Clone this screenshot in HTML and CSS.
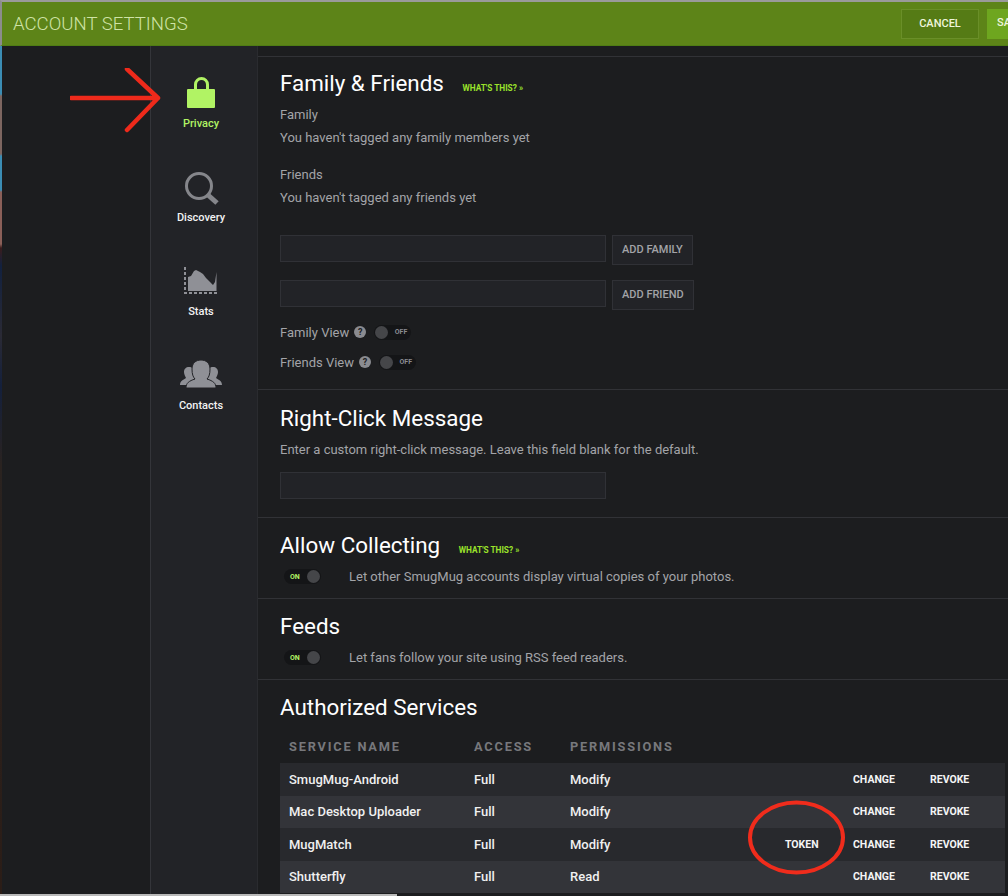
FILE: index.html
```html
<!DOCTYPE html>
<html>
<head>
<meta charset="utf-8">
<title>Account Settings</title>
<link rel="stylesheet" href="styles.css">
</head>
<body>

<div class="topbar">
	<div class="title">ACCOUNT SETTINGS</div>
	<div class="actions">
		<a class="btn cancel">CANCEL</a>
		<a class="btn save">SAVE</a>
	</div>
</div>

<div class="main">
	<div class="gutter"></div>

	<div class="sidebar">
		<div class="navitem active">
			<svg width="30" height="36" viewBox="0 0 30 36"><path d="M9.500 14V8.500a6 6 0 0 1 12 0V14" fill="none" stroke="#b1f364" stroke-width="3"/><rect x="1" y="13" width="28" height="19" rx="1" fill="#b1f364"/></svg>
			<span>Privacy</span>
		</div>
		<div class="navitem">
			<svg width="36" height="36" viewBox="0 0 36 36"><circle cx="16" cy="16" r="12.500" fill="none" stroke="#85868b" stroke-width="3"/><path d="M25 25l9 8" stroke="#85868b" stroke-width="5"/></svg>
			<span>Discovery</span>
		</div>
		<div class="navitem">
			<svg width="36" height="36" viewBox="0 0 36 36"><path d="M5 27V13l3-1 3-5 2-1 4 2 3 2 3 4 4 4 3 3 2-3 1.500-10v19z" fill="#8f9096"/><path d="M2 3v26h32" fill="none" stroke="#8f9096" stroke-width="2" stroke-dasharray="3 2"/></svg>
			<span>Stats</span>
		</div>
		<div class="navitem">
			<svg width="44" height="36" viewBox="0 0 44 36"><g fill="#8f9096"><path d="M1 27c0-4 3-5 6-7-1-2-2-4-2-6 0-3 2-5 5-5s5 2 5 5v8l-6 5z"/><path d="M43 27c0-4-3-5-6-7 1-2 2-4 2-6 0-3-2-5-5-5s-5 2-5 5v8l6 5z"/><path d="M7 30c0-5 3-7 9-9-2-2-3-5-3-10 0-6 4-9 9-9s9 3 9 9c0 5-1 8-3 10 6 2 9 4 9 9z" stroke="#222327"/></g></svg>
			<span>Contacts</span>
		</div>
	</div>

	<div class="content">
		<div class="section family">
			<h2>Family &amp; Friends <a class="whats">WHAT'S THIS? &raquo;</a></h2>
			<p class="label">Family</p>
			<p class="label">You haven't tagged any family members yet</p>
			<p class="label second">Friends</p>
			<p class="label">You haven't tagged any friends yet</p>
			<div class="addrow first">
				<div class="field"></div>
				<a class="addbtn">ADD FAMILY</a>
			</div>
			<div class="addrow">
				<div class="field"></div>
				<a class="addbtn">ADD FRIEND</a>
			</div>
			<div class="viewrow">
				Family View <span class="help">?</span>
				<span class="toggle off"><i></i><b>OFF</b></span>
			</div>
			<div class="viewrow">
				Friends View <span class="help">?</span>
				<span class="toggle off"><i></i><b>OFF</b></span>
			</div>
		</div>

		<div class="section rightclick">
			<h2>Right-Click Message</h2>
			<p class="label">Enter a custom right-click message. Leave this field blank for the default.</p>
			<div class="field lone"></div>
		</div>

		<div class="section short">
			<h2>Allow Collecting <a class="whats">WHAT'S THIS? &raquo;</a></h2>
			<div class="onrow">
				<span class="toggle on"><b>ON</b><i></i></span>
				Let other SmugMug accounts display virtual copies of your photos.
			</div>
		</div>

		<div class="section short">
			<h2>Feeds</h2>
			<div class="onrow">
				<span class="toggle on"><b>ON</b><i></i></span>
				Let fans follow your site using RSS feed readers.
			</div>
		</div>

		<div class="section services">
			<h2>Authorized Services</h2>
			<table>
				<tr class="head"><th class="c1">SERVICE NAME</th><th class="c2">ACCESS</th><th class="c3">PERMISSIONS</th><th class="c4"></th><th class="c5"></th><th class="c6"></th></tr>
				<tr><td>SmugMug-Android</td><td>Full</td><td>Modify</td><td></td><td class="act">CHANGE</td><td class="act">REVOKE</td></tr>
				<tr><td>Mac Desktop Uploader</td><td>Full</td><td>Modify</td><td></td><td class="act">CHANGE</td><td class="act">REVOKE</td></tr>
				<tr><td>MugMatch</td><td>Full</td><td>Modify</td><td class="act token">TOKEN</td><td class="act">CHANGE</td><td class="act">REVOKE</td></tr>
				<tr><td>Shutterfly</td><td>Full</td><td>Read</td><td></td><td class="act">CHANGE</td><td class="act">REVOKE</td></tr>
			</table>
		</div>
	</div>
</div>

<!-- red marks and window edge on top of the screenshot -->
<svg class="arrow" width="100" height="72" viewBox="0 0 100 72"><path d="M1 30H88M57 1 88 30 57 62" fill="none" stroke="#ee2a1b" stroke-width="4.500" stroke-linecap="round" stroke-linejoin="round"/></svg>
<svg class="circle" width="100" height="78" viewBox="0 0 100 78"><ellipse cx="48.500" cy="37.500" rx="46.500" ry="35" fill="none" stroke="#f02c1c" stroke-width="4"/></svg>
<div class="edge"></div>

</body>
</html>
```

FILE: styles.css
```css
html, body { margin: 0; padding: 0; }
body {
	background: #1c1d1f;
	color: #a3a4a8;
	font-family: Roboto, "Liberation Sans", sans-serif;
	font-size: 13px;
	height: 896px;
	width: 1008px;
	overflow: hidden;
	position: relative;
}

/* top bar */
.topbar {
	background: #5d8418;
	border-top: 2px solid #9a9a9a;
	border-left: 2px solid #8c8c8c;
	border-bottom: 1px solid #4f7d14;
	box-sizing: border-box;
	height: 46px;
	display: flex;
	align-items: center;
	justify-content: space-between;
	padding-left: 11px;
}
.title {
	color: #cfe3a6;
	font-size: 18.600px;
	font-weight: 300;
}
.actions { display: flex; gap: 8px; width: 107px; flex: none; margin-top: 1px; overflow: hidden; }
.btn {
	box-sizing: border-box;
	color: #eef5dc;
	font-size: 11px;
	font-weight: 500;
	height: 30px;
	line-height: 28px;
	text-align: center;
	flex: none;
}
.cancel { border: 1px solid #6a8f28; background: #557b15; width: 78px; }
.save { background: #6ea61f; width: 60px; text-align: left; padding-left: 10px; }

.main { display: flex; height: 850px; }
.gutter {
	width: 151px;
	flex: none;
	box-sizing: border-box;
	border-right: 1px solid #34353a;
	/* bit of desktop wallpaper showing down the left edge */
	background:
		linear-gradient(#3b8db4 0, #3b8db4 48px, #7d6660 50px, #7d6660 108px, #3b8db4 110px, #3b8db4 144px, #8a5f58 146px, #8a5f58 198px, #3a1c1c 202px, #12213f 220px, #2a2a35 290px, #14203c 340px, #2a2320 420px, #2b1d17 850px) 0 0 / 2px 100% no-repeat,
		#1c1d1f;
}

/* left nav */
.sidebar {
	width: 106px;
	flex: none;
	background: #222327;
	padding-top: 30px;
	padding-right: 6px;
	box-sizing: border-box;
}
.navitem {
	height: 94px;
	display: flex;
	flex-direction: column;
	align-items: center;
	color: #f2f2f2;
	font-size: 11px;
	font-weight: 500;
}
.navitem svg { flex: none; margin-bottom: 5px; }
.navitem.active { color: #b1f364; }

/* sections */
.content { flex: 1; min-width: 0; padding-top: 10px; background: #1c1d1f; border-left: 1px solid #2a2b2f; }
.section {
	background: #1c1d1f;
	border-top: 1px solid #313236;
	padding-left: 22px;
	box-sizing: border-box;
}
.family { height: 333px; padding-top: 12px; }
.rightclick { height: 128px; padding-top: 14px; }
.short { height: 81px; padding-top: 13px; }
.services { height: 240px; padding-top: 13px; }
h2 {
	color: #fff;
	font-size: 22.400px;
	font-weight: 400;
	line-height: 29px;
	margin: 0;
}
.whats {
	color: #9be32b;
	font-size: 8.300px;
	font-weight: 700;
	margin-left: 13px;
	line-height: 0;
}
.label {
	margin: 0;
	font-size: 13px;
	line-height: 17px;
	padding-top: 6px;
}
.family h2 + .label { padding-top: 8px; }
.rightclick .label { padding-top: 8px; }
.second { padding-top: 20px; }

.field {
	background: #222327;
	border: 1px solid #303136;
	box-sizing: border-box;
	width: 326px;
	height: 27px;
}
.addrow { display: flex; gap: 6px; margin-top: 15px; }
.addrow.first { margin-top: 29px; }
.addbtn {
	background: #222327;
	border: 1px solid #303136;
	box-sizing: border-box;
	height: 30px;
	line-height: 28px;
	padding: 0 9px;
	font-size: 11px;
	font-weight: 500;
}
.viewrow {
	display: flex;
	align-items: center;
	gap: 5px;
	height: 20px;
	margin-top: 12px;
}
.viewrow + .viewrow { margin-top: 10px; }
.help {
	width: 12px;
	height: 12px;
	border-radius: 50%;
	background: #8a8b90;
	color: #1c1d1f;
	font-size: 9px;
	font-weight: 700;
	line-height: 12px;
	text-align: center;
}
.toggle {
	display: inline-flex;
	align-items: center;
	background: #141517;
	border-radius: 8px;
	width: 37px;
	height: 15px;
	justify-content: space-between;
	flex: none;
}
.toggle i {
	width: 13px;
	height: 13px;
	border-radius: 50%;
	background: #454649;
	margin: 0 1px;
}
.toggle b { font-size: 7px; font-weight: 700; color: #8a8b90; margin-right: 4px; }
.toggle.off { margin-left: 3px; }
.toggle.on { margin-left: 4px; }
.toggle.on b { color: #b1f364; margin: 0 0 0 6px; }
.lone { margin-top: 14px; }
.onrow {
	display: flex;
	align-items: center;
	gap: 28px;
	margin-top: 9px;
}

/* services table */
table {
	border-collapse: collapse;
	margin-top: 8px;
	width: 725px;
	table-layout: fixed;
}
th {
	box-sizing: border-box;
	color: #77787c;
	font-size: 12.800px;
	font-weight: 700;
	letter-spacing: 1.800px;
	text-align: left;
	height: 33px;
	padding: 0 0 0 9px;
}
td {
	box-sizing: border-box;
	color: #f0f0f0;
	font-size: 13px;
	font-weight: 500;
	height: 32.500px;
	padding: 0 0 0 9px;
	background: #28292d;
	white-space: nowrap;
}
tr:nth-child(odd) td { background: #333439; }
.c1 { width: 185px; }
.c2 { width: 96px; }
.c3 { width: 200px; }
.c4 { width: 87px; }
.c5 { width: 77px; }
.c6 { width: 80px; }
td.act { font-size: 10.500px; font-weight: 700; color: #f5f5f5; padding-left: 5px; }
td.token { padding-left: 24px; }

/* annotations */
.arrow { position: absolute; left: 70px; top: 68px; }
.circle { position: absolute; left: 748px; top: 800px; }
.edge { position: absolute; left: 0; bottom: 0; width: 397px; height: 2px; background: #b9b9b9; }
```
